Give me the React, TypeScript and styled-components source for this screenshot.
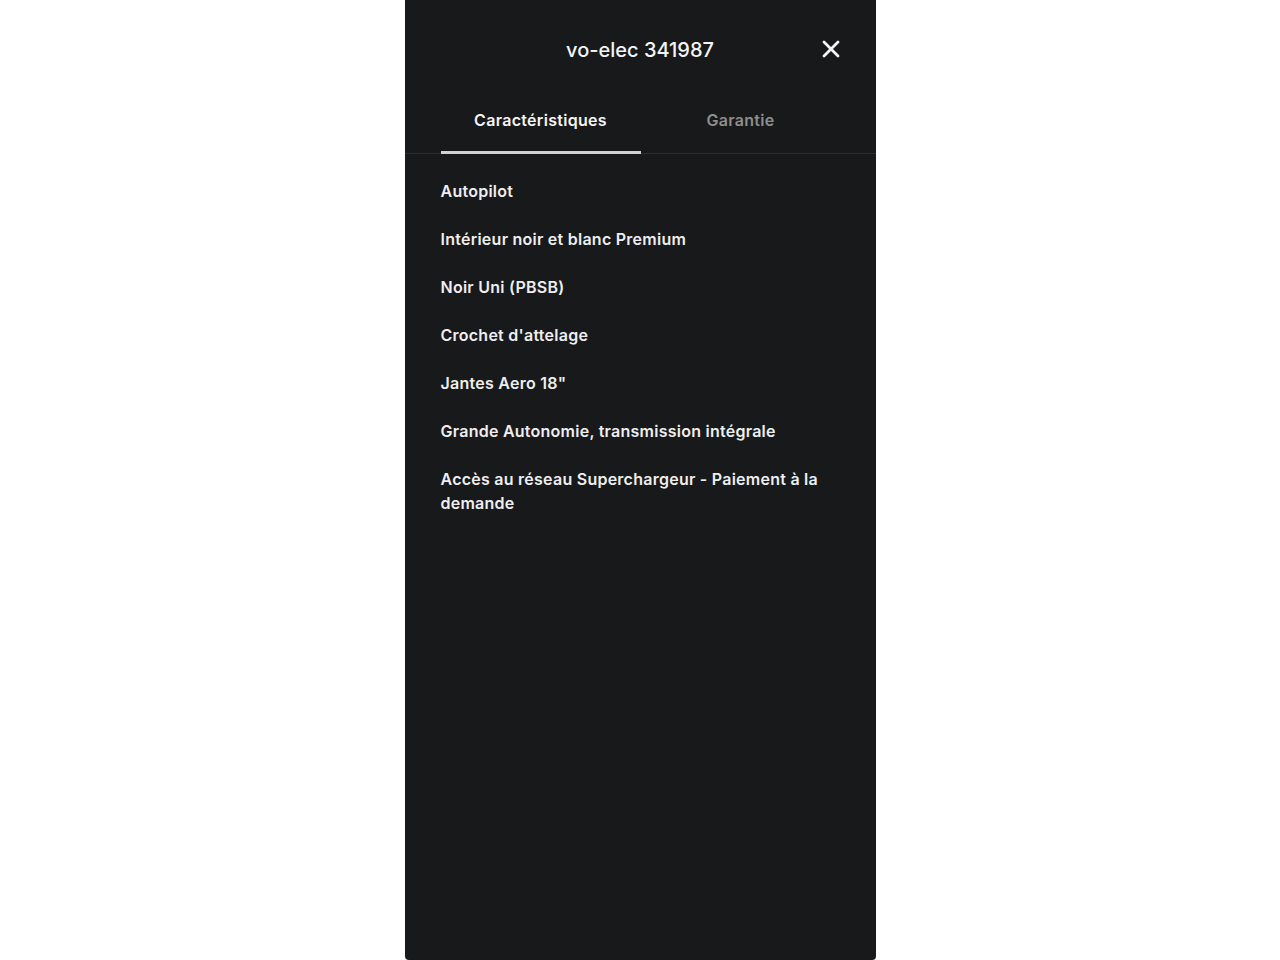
import React, { useState } from "react";
import styled, { createGlobalStyle } from "styled-components";

const GlobalStyle = createGlobalStyle`
  html, body {
    margin: 0;
    padding: 0;
    background: #ffffff;
    font-family: Inter, "Noto Sans", sans-serif;
  }
  * { box-sizing: border-box; }
`;

const Page = styled.div`
  display: flex;
  justify-content: center;
  min-height: 960px;
`;

const Panel = styled.div`
  width: 471px;
  height: 960px;
  background: #18191b;
  border-radius: 0 0 4px 4px;
  display: flex;
  flex-direction: column;
  color: #eeeeee;
`;

const Header = styled.div`
  position: relative;
  display: flex;
  align-items: center;
  justify-content: center;
  height: 100px;
`;

const Title = styled.h1`
  margin: 0;
  font-size: 20px;
  font-weight: 500;
  color: #f4f4f4;
  letter-spacing: 0;
`;

const CloseButton = styled.button`
  position: absolute;
  right: 33px;
  top: 37px;
  width: 24px;
  height: 24px;
  padding: 0;
  border: none;
  background: none;
  color: #f4f4f4;
  cursor: pointer;
  display: flex;
  align-items: center;
  justify-content: center;
`;

const TabBar = styled.div`
  display: flex;
  padding: 0 35px 0 36px;
  border-bottom: 1px solid #2c2d30;
`;

const Tab = styled.button<{ $active: boolean }>`
  flex: 1;
  height: 54px;
  padding: 0 0 12px;
  border: none;
  background: none;
  font-family: inherit;
  font-size: 16px;
  font-weight: 600;
  letter-spacing: 0.3px;
  color: ${(p) => (p.$active ? "#f4f4f4" : "#8e8e8e")};
  border-bottom: 3px solid ${(p) => (p.$active ? "#d0d1d2" : "transparent")};
  margin-bottom: -1px;
  cursor: pointer;
`;

const List = styled.ul`
  list-style: none;
  margin: 0;
  padding: 25px 36px 0;
  display: flex;
  flex-direction: column;
  gap: 24px;
`;

const Item = styled.li`
  font-size: 16px;
  font-weight: 600;
  letter-spacing: 0.25px;
  line-height: 24px;
  color: #eeeeee;
`;

const features = [
  "Autopilot",
  "Intérieur noir et blanc Premium",
  "Noir Uni (PBSB)",
  "Crochet d'attelage",
  'Jantes Aero 18"',
  "Grande Autonomie, transmission intégrale",
  "Accès au réseau Superchargeur - Paiement à la demande",
];

export default function App() {
  const [tab, setTab] = useState(0);

  return (
    <Page>
      <GlobalStyle />
      <Panel>
        <Header>
          <Title>vo-elec 341987</Title>
          <CloseButton aria-label="Fermer">
            <svg width="18" height="18" viewBox="0 0 18 18">
              <path
                d="M2 2 L16 16 M16 2 L2 16"
                stroke="currentColor"
                strokeWidth="2.8"
                strokeLinecap="round"
              />
            </svg>
          </CloseButton>
        </Header>
        <TabBar>
          <Tab $active={tab === 0} onClick={() => setTab(0)}>
            Caractéristiques
          </Tab>
          <Tab $active={tab === 1} onClick={() => setTab(1)}>
            Garantie
          </Tab>
        </TabBar>
        {tab === 0 && (
          <List>
            {features.map((f) => (
              <Item key={f}>{f}</Item>
            ))}
          </List>
        )}
      </Panel>
    </Page>
  );
}
